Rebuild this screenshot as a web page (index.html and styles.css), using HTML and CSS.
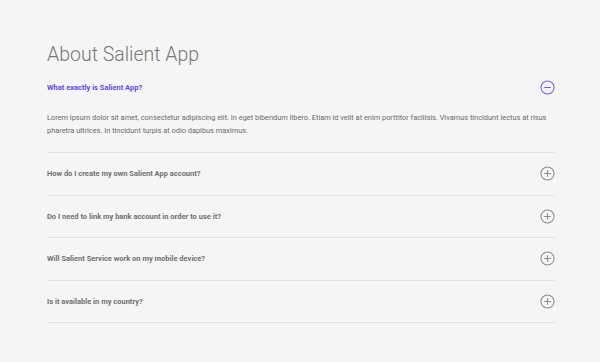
FILE: index.html
```html
<!DOCTYPE html>
<html lang="en">
<head>
    <meta charset="UTF-8">
    <meta name="viewport" content="width=device-width, initial-scale=1.0">
    <title>About Salient App</title>
    <link rel="stylesheet" href="styles.css">
</head>
<body>

    <div class="faq">
        <h1>About Salient App</h1>

        <div class="faq-item open">
            <div class="faq-question">
                <span>What exactly is Salient App?</span>
                <svg class="toggle" viewBox="0 0 16 16"><circle cx="8" cy="8" r="7"/><path d="M4.5 8h7"/></svg>
            </div>
            <p class="faq-answer">Lorem ipsum dolor sit amet, consectetur adipiscing elit. In eget bibendum libero. Etiam id velit at enim porttitor facilisis. Vivamus tincidunt lectus at risus pharetra ultrices. In tincidunt turpis at odio dapibus maximus.</p>
        </div>

        <div class="faq-item">
            <div class="faq-question">
                <span>How do I create my own Salient App account?</span>
                <svg class="toggle" viewBox="0 0 16 16"><circle cx="8" cy="8" r="7"/><path d="M4.5 8h7M8 4.5v7"/></svg>
            </div>
        </div>

        <div class="faq-item">
            <div class="faq-question">
                <span>Do I need to link my bank account in order to use it?</span>
                <svg class="toggle" viewBox="0 0 16 16"><circle cx="8" cy="8" r="7"/><path d="M4.5 8h7M8 4.5v7"/></svg>
            </div>
        </div>

        <div class="faq-item">
            <div class="faq-question">
                <span>Will Salient Service work on my mobile device?</span>
                <svg class="toggle" viewBox="0 0 16 16"><circle cx="8" cy="8" r="7"/><path d="M4.5 8h7M8 4.5v7"/></svg>
            </div>
        </div>

        <div class="faq-item">
            <div class="faq-question">
                <span>Is it available in my country?</span>
                <svg class="toggle" viewBox="0 0 16 16"><circle cx="8" cy="8" r="7"/><path d="M4.5 8h7M8 4.5v7"/></svg>
            </div>
        </div>
    </div>

</body>
</html>
```

FILE: styles.css
```css
body {
    margin: 0;
    background: #f5f5f5;
    font-family: Roboto, "Liberation Sans", sans-serif;
    color: #666;
}

.faq {
    width: 508px;
    margin-left: 47px;
    padding-top: 42px;
}

.faq h1 {
    margin: 0;
    font-size: 19.5px;
    font-weight: 300;
    line-height: 25px;
    color: #777;
}

.faq-item {
    border-bottom: 1px solid #e2e2e2;
}

.faq-question {
    display: flex;
    justify-content: space-between;
    align-items: center;
    height: 41.5px;
    font-size: 7.5px;
    font-weight: bold;
    color: #707070;
}

.faq-item.open .faq-question {
    color: #6b3ff7;
}

.toggle {
    width: 15px;
    height: 15px;
    fill: none;
    stroke: #8a8a8a;
    stroke-width: 1.1;
}

.faq-item.open .toggle {
    stroke: #7a55f5;
}

.faq-answer {
    margin: 0;
    padding: 2.5px 0 15px;
    font-size: 7.4px;
    line-height: 13px;
    color: #6a6a6a;
}
```
